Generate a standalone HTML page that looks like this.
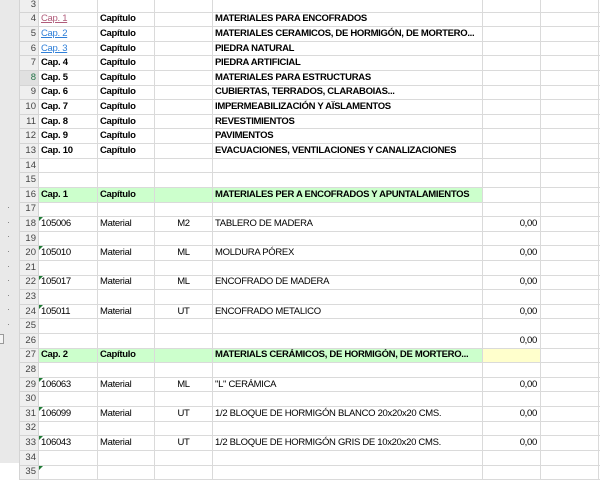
<!DOCTYPE html>
<html><head><meta charset="utf-8"><style>
*{margin:0;padding:0;box-sizing:border-box}
body{width:600px;height:463px;overflow:hidden;background:#fff;font-family:"Liberation Sans",Arial,sans-serif;font-size:9.5px;letter-spacing:-0.3px;color:#000;position:relative}
#gut{position:absolute;left:0;top:0;width:19px;height:463px;background:#e9e9e9}
table{position:absolute;left:19px;top:-3px;width:589px;border-collapse:collapse;table-layout:fixed}
td{height:14.62px;border:1px solid #dadada;padding:0 2px;white-space:nowrap;overflow:hidden;line-height:12px;vertical-align:middle}
td.h{background:#efefef;color:#444;text-align:right;border-color:#d4d4d4;padding-right:2px;letter-spacing:0}
td.sel{color:#217346;background:#e0e0e0}
.b{font-weight:bold}
.c{text-align:center}
.r{text-align:right;padding-right:3px}
.g{background:#ccffcc}
.y{background:#ffffcc}
.l1{color:#b05c7a;text-decoration:underline}
.l2{color:#2f7fd8;text-decoration:underline}
.m{position:relative}
.m:before{content:"";position:absolute;left:0;top:0;border-top:4px solid #1e7b34;border-right:4px solid transparent}
.dot{position:absolute;left:8px;width:1px;height:1px;background:#888}
</style></head><body>
<div id="gut"></div>
<div class="dot" style="top:207px"></div><div class="dot" style="top:222px"></div><div class="dot" style="top:236px"></div><div class="dot" style="top:251px"></div><div class="dot" style="top:266px"></div><div class="dot" style="top:280px"></div><div class="dot" style="top:295px"></div><div class="dot" style="top:309px"></div><div class="dot" style="top:324px"></div>
<div style="position:absolute;left:-3px;top:334px;width:7px;height:10px;border:1px solid #999;background:#f4f4f4"></div>
<table>
<colgroup><col style="width:19px"><col style="width:59px"><col style="width:57px"><col style="width:58px"><col style="width:270px"><col style="width:58px"><col style="width:58px"><col style="width:10px"></colgroup>
<tr><td class="h">3</td><td></td><td></td><td></td><td></td><td></td><td></td><td></td></tr>
<tr><td class="h">4</td><td><span class="l1">Cap. 1</span></td><td class="b">Capítulo</td><td></td><td class="b">MATERIALES PARA ENCOFRADOS</td><td></td><td></td><td></td></tr>
<tr><td class="h">5</td><td><span class="l2">Cap. 2</span></td><td class="b">Capítulo</td><td></td><td class="b">MATERIALES CERAMICOS, DE HORMIGÓN, DE MORTERO...</td><td></td><td></td><td></td></tr>
<tr><td class="h">6</td><td><span class="l2">Cap. 3</span></td><td class="b">Capítulo</td><td></td><td class="b">PIEDRA NATURAL</td><td></td><td></td><td></td></tr>
<tr><td class="h">7</td><td class="b">Cap. 4</td><td class="b">Capítulo</td><td></td><td class="b">PIEDRA ARTIFICIAL</td><td></td><td></td><td></td></tr>
<tr><td class="h sel">8</td><td class="b">Cap. 5</td><td class="b">Capítulo</td><td></td><td class="b">MATERIALES PARA ESTRUCTURAS</td><td></td><td></td><td></td></tr>
<tr><td class="h">9</td><td class="b">Cap. 6</td><td class="b">Capítulo</td><td></td><td class="b">CUBIERTAS, TERRADOS, CLARABOIAS...</td><td></td><td></td><td></td></tr>
<tr><td class="h">10</td><td class="b">Cap. 7</td><td class="b">Capítulo</td><td></td><td class="b">IMPERMEABILIZACIÓN Y AÏSLAMENTOS</td><td></td><td></td><td></td></tr>
<tr><td class="h">11</td><td class="b">Cap. 8</td><td class="b">Capítulo</td><td></td><td class="b">REVESTIMIENTOS</td><td></td><td></td><td></td></tr>
<tr><td class="h">12</td><td class="b">Cap. 9</td><td class="b">Capítulo</td><td></td><td class="b">PAVIMENTOS</td><td></td><td></td><td></td></tr>
<tr><td class="h">13</td><td class="b">Cap. 10</td><td class="b">Capítulo</td><td></td><td class="b">EVACUACIONES, VENTILACIONES Y CANALIZACIONES</td><td></td><td></td><td></td></tr>
<tr><td class="h">14</td><td></td><td></td><td></td><td></td><td></td><td></td><td></td></tr>
<tr><td class="h">15</td><td></td><td></td><td></td><td></td><td></td><td></td><td></td></tr>
<tr><td class="h">16</td><td class="b g">Cap. 1</td><td class="b g">Capítulo</td><td class="g"></td><td class="b g">MATERIALES PER A ENCOFRADOS Y APUNTALAMIENTOS</td><td></td><td></td><td></td></tr>
<tr><td class="h">17</td><td></td><td></td><td></td><td></td><td></td><td></td><td></td></tr>
<tr><td class="h">18</td><td class="m">105006</td><td>Material</td><td class="c">M2</td><td>TABLERO DE MADERA</td><td class="r">0,00</td><td></td><td></td></tr>
<tr><td class="h">19</td><td></td><td></td><td></td><td></td><td></td><td></td><td></td></tr>
<tr><td class="h">20</td><td class="m">105010</td><td>Material</td><td class="c">ML</td><td>MOLDURA PÓREX</td><td class="r">0,00</td><td></td><td></td></tr>
<tr><td class="h">21</td><td></td><td></td><td></td><td></td><td></td><td></td><td></td></tr>
<tr><td class="h">22</td><td class="m">105017</td><td>Material</td><td class="c">ML</td><td>ENCOFRADO DE MADERA</td><td class="r">0,00</td><td></td><td></td></tr>
<tr><td class="h">23</td><td></td><td></td><td></td><td></td><td></td><td></td><td></td></tr>
<tr><td class="h">24</td><td class="m">105011</td><td>Material</td><td class="c">UT</td><td>ENCOFRADO METALICO</td><td class="r">0,00</td><td></td><td></td></tr>
<tr><td class="h">25</td><td></td><td></td><td></td><td></td><td></td><td></td><td></td></tr>
<tr><td class="h">26</td><td></td><td></td><td></td><td></td><td class="r">0,00</td><td></td><td></td></tr>
<tr><td class="h">27</td><td class="b g">Cap. 2</td><td class="b g">Capítulo</td><td class="g"></td><td class="b g">MATERIALS CERÁMICOS, DE HORMIGÓN, DE MORTERO...</td><td class="y"></td><td></td><td></td></tr>
<tr><td class="h">28</td><td></td><td></td><td></td><td></td><td></td><td></td><td></td></tr>
<tr><td class="h">29</td><td class="m">106063</td><td>Material</td><td class="c">ML</td><td>"L" CERÁMICA</td><td class="r">0,00</td><td></td><td></td></tr>
<tr><td class="h">30</td><td></td><td></td><td></td><td></td><td></td><td></td><td></td></tr>
<tr><td class="h">31</td><td class="m">106099</td><td>Material</td><td class="c">UT</td><td>1/2 BLOQUE DE HORMIGÓN BLANCO 20x20x20 CMS.</td><td class="r">0,00</td><td></td><td></td></tr>
<tr><td class="h">32</td><td></td><td></td><td></td><td></td><td></td><td></td><td></td></tr>
<tr><td class="h">33</td><td class="m">106043</td><td>Material</td><td class="c">UT</td><td>1/2 BLOQUE DE HORMIGÓN GRIS DE 10x20x20 CMS.</td><td class="r">0,00</td><td></td><td></td></tr>
<tr><td class="h">34</td><td></td><td></td><td></td><td></td><td></td><td></td><td></td></tr>
<tr><td class="h">35</td><td class="m"></td><td></td><td></td><td></td><td></td><td></td><td></td></tr>
</table>
</body></html>
